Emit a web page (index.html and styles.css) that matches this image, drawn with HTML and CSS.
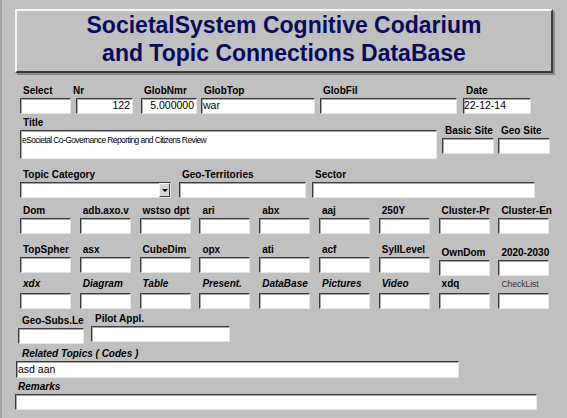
FILE: index.html
```html
<!DOCTYPE html>
<html>
<head>
<meta charset="utf-8">
<title>SocietalSystem Cognitive Codarium</title>
<link rel="stylesheet" href="styles.css">
</head>
<body>
<div class="screen">
  <header class="banner">
    <h1>SocietalSystem Cognitive Codarium<br>and Topic Connections DataBase</h1>
  </header>

  <form class="form">
    <div class="row row-1">
      <div class="field f-select"><label>Select</label><div class="box"></div></div>
      <div class="field f-nr"><label>Nr</label><div class="box num">122</div></div>
      <div class="field f-globnmr"><label>GlobNmr</label><div class="box num">5.000000</div></div>
      <div class="field f-globtop"><label>GlobTop</label><div class="box">war</div></div>
      <div class="field f-globfil"><label>GlobFil</label><div class="box"></div></div>
      <div class="field f-date"><label>Date</label><div class="box">22-12-14</div></div>
    </div>

    <div class="row row-2">
      <div class="field f-title"><label>Title</label><div class="box tall">eSocietal Co-Governance Reporting and Citizens Review</div></div>
      <div class="field f-basic"><label>Basic Site</label><div class="box"></div></div>
      <div class="field f-geosite"><label>Geo Site</label><div class="box"></div></div>
    </div>

    <div class="row row-3">
      <div class="field f-topic"><label>Topic Category</label>
        <div class="box combo"><span class="combo-btn"><span class="arrow"></span></span></div>
      </div>
      <div class="field f-geoterr"><label>Geo-Territories</label><div class="box"></div></div>
      <div class="field f-sector"><label>Sector</label><div class="box"></div></div>
    </div>

    <div class="grid9 row-4">
      <div class="field"><label>Dom</label><div class="box"></div></div>
      <div class="field"><label>adb.axo.v</label><div class="box"></div></div>
      <div class="field"><label>wstso dpt</label><div class="box"></div></div>
      <div class="field"><label>ari</label><div class="box"></div></div>
      <div class="field"><label>abx</label><div class="box"></div></div>
      <div class="field"><label>aaj</label><div class="box"></div></div>
      <div class="field"><label>250Y</label><div class="box"></div></div>
      <div class="field"><label>Cluster-Pr</label><div class="box"></div></div>
      <div class="field"><label>Cluster-En</label><div class="box"></div></div>
    </div>

    <div class="grid9 row-5">
      <div class="field"><label>TopSpher</label><div class="box"></div></div>
      <div class="field"><label>asx</label><div class="box"></div></div>
      <div class="field"><label>CubeDim</label><div class="box"></div></div>
      <div class="field"><label>opx</label><div class="box"></div></div>
      <div class="field"><label>ati</label><div class="box"></div></div>
      <div class="field"><label>acf</label><div class="box"></div></div>
      <div class="field"><label>SyllLevel</label><div class="box"></div></div>
      <div class="field lower"><label>OwnDom</label><div class="box"></div></div>
      <div class="field lower"><label>2020-2030</label><div class="box"></div></div>
    </div>

    <div class="grid9 row-6">
      <div class="field"><label class="it">xdx</label><div class="box"></div></div>
      <div class="field"><label class="it">Diagram</label><div class="box"></div></div>
      <div class="field"><label class="it">Table</label><div class="box"></div></div>
      <div class="field"><label class="it">Present.</label><div class="box"></div></div>
      <div class="field"><label class="it">DataBase</label><div class="box"></div></div>
      <div class="field"><label class="it">Pictures</label><div class="box"></div></div>
      <div class="field"><label class="it">Video</label><div class="box"></div></div>
      <div class="field"><label>xdq</label><div class="box"></div></div>
      <div class="field"><label class="small">CheckList</label><div class="box"></div></div>
    </div>

    <div class="row row-7">
      <div class="field f-geosubs"><label>Geo-Subs.Le</label><div class="box"></div></div>
      <div class="field f-pilot"><label>Pilot Appl.</label><div class="box"></div></div>
    </div>

    <div class="row row-8">
      <div class="field f-related"><label class="it">Related Topics ( Codes )</label><div class="box related">asd aan</div></div>
    </div>

    <div class="row row-9">
      <div class="field f-remarks"><label class="it">Remarks</label><div class="box"></div></div>
    </div>
  </form>
</div>
</body>
</html>
```

FILE: styles.css
```css
html, body {
  margin: 0;
  padding: 0;
}

body {
  background: #c0c0c0;
  font-family: "Liberation Sans", Arial, sans-serif;
  color: #000;
}

.screen {
  border-left: 2px solid #a0a0a0;
  min-height: 418px;
  box-sizing: border-box;
  padding-top: 9px;
}

/* Banner */
.banner {
  margin-left: 13px;
  width: 538px;
  height: 64px;
  box-sizing: border-box;
  border: 2px solid;
  border-color: #f6f6f6 #3c3c3c #3c3c3c #f6f6f6;
  box-shadow: 2px 2px 0 #8c8c8c;
  text-align: center;
}

.banner h1 {
  margin: 0;
  padding-top: 0;
  font-size: 23px;
  line-height: 28px;
  font-weight: bold;
  color: #0a0a5c;
}

/* Form */
.form {
  padding-left: 18px;
}

.row {
  display: flex;
  align-items: flex-start;
}

.grid9 {
  display: grid;
  grid-template-columns: repeat(9, 51px);
  column-gap: 8.8px;
  align-items: start;
}

.field {
  display: flex;
  flex-direction: column;
  gap: 1px;
}

.field label {
  display: block;
  height: 12px;
  line-height: 12px;
  padding-left: 3px;
  font-size: 10px;
  font-weight: bold;
  white-space: nowrap;
}

.field label.it {
  font-style: italic;
}

.field label.small {
  font-weight: normal;
  font-size: 8.5px;
  color: #303030;
}

.box {
  position: relative;
  height: 16px;
  box-sizing: border-box;
  background: #fff;
  border: 1px solid;
  border-color: #3a3a3a #e6e6e6 #e6e6e6 #3a3a3a;
  box-shadow: inset 1px 1px 0 #a8a8a8;
  padding: 0 2px 0 1px;
  font-size: 10.5px;
  line-height: 13px;
  white-space: nowrap;
  overflow: hidden;
}

.box.num {
  text-align: right;
}

.box.tall {
  height: 29px;
  padding-top: 4px;
  font-size: 8.5px;
  line-height: 10px;
  letter-spacing: -0.6px;
}

/* Row 1 */
.row-1 { margin-top: 12px; }
.f-select { width: 51px; }
.f-nr { width: 57px; margin-left: 5px; }
.f-nr label { padding-left: 0; margin-left: -3px; }
.f-globnmr { width: 56px; margin-left: 8px; }
.f-globtop { width: 114px; margin-left: 4px; }
.f-globfil { width: 137px; margin-left: 5px; }
.f-date { width: 68px; margin-left: 6px; }
.f-date .box { padding-left: 0; }

/* Row 2 */
.row-2 { margin-top: 3px; }
.f-title { width: 417px; }
.f-basic { width: 52px; margin-left: 5px; margin-top: 8px; }
.f-geosite { width: 52px; margin-left: 4px; margin-top: 8px; }

/* Row 3 */
.row-3 { margin-top: 10px; }
.f-topic { width: 151px; }
.f-geoterr { width: 127px; margin-left: 8px; }
.f-sector { width: 223px; margin-left: 6px; }

.combo-btn {
  position: absolute;
  right: 0;
  top: 0;
  width: 11px;
  height: 14px;
  box-sizing: border-box;
  background: #d4d4d4;
  border: 1px solid;
  border-color: #f4f4f4 #404040 #404040 #f4f4f4;
  display: flex;
  align-items: center;
  justify-content: center;
}

.arrow {
  width: 0;
  height: 0;
  border-left: 3px solid transparent;
  border-right: 3px solid transparent;
  border-top: 3px solid #000;
}

/* Grid rows */
.row-4 { margin-top: 7px; }
.row-5 { margin-top: 10px; }
.row-5 .lower { margin-top: 3px; }
.row-6 { margin-top: 2px; }
.row-6 .field { gap: 3px; }

/* Row 7 */
.row-7 { margin-top: 4px; }
.f-geosubs { width: 66px; margin-left: -2px; margin-top: 2px; }
.f-geosubs label { padding-left: 4px; }
.f-pilot { width: 139px; margin-left: 7px; }
.f-pilot label { padding-left: 4px; }

/* Related / Remarks */
.row-8 { margin-top: 4px; }
.f-related { width: 443px; margin-left: -4px; }
.f-related label { padding-left: 6px; }
.box.related { height: 17px; padding-left: 1px; line-height: 14px; }

.row-9 { margin-top: 3px; }
.f-remarks { width: 522px; margin-left: -5px; }
.f-remarks label { padding-left: 3px; }
```
